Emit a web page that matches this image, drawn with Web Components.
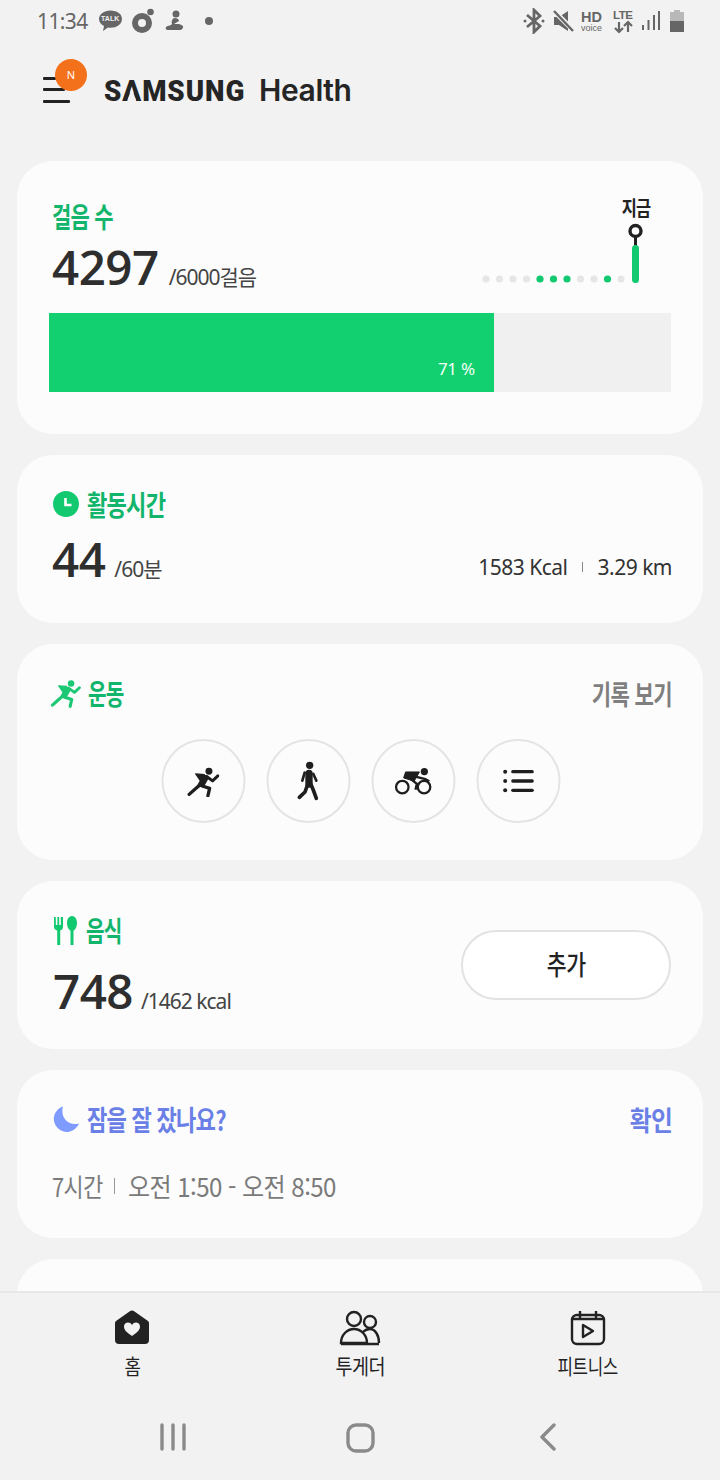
<!DOCTYPE html>
<html lang="ko">
<head>
<meta charset="utf-8">
<title>Samsung Health</title>
<style>
  html, body { margin: 0; padding: 0; background: #f2f2f2; }
  body { font-family: "Noto Sans CJK KR", "Noto Sans", sans-serif; }
</style>
</head>
<body>
<app-shell>
  <status-bar slot="top"></status-bar>
  <app-header slot="top"></app-header>

  <health-card style="--card-h:273px;--pad:34px">
    <card-title style="--sx:.75">걸음 수</card-title>
    <step-timeline slot="side"></step-timeline>
    <big-stat value="4297" goal="/6000걸음" style="margin-top:3px"></big-stat>
    <progress-strip percent="71.5" label="71 %" slot="bottom"></progress-strip>
  </health-card>

  <health-card style="--card-h:168px">
    <card-title>
      <svg slot="icon" width="26" height="26" viewBox="0 0 26 26" style="margin-left:1px"><circle cx="13" cy="13" r="13" fill="#12c96f"/><path d="M12.500 7v7h6" fill="none" stroke="#fff" stroke-width="2.600"/></svg>
      활동시간
    </card-title>
    <div style="display:flex;justify-content:space-between;align-items:flex-end;margin-top:7px">
      <big-stat value="44" goal="/60분" style="margin-top:0;--gap:9px"></big-stat>
      <trip-stats></trip-stats>
    </div>
  </health-card>

  <health-card style="--card-h:216px">
    <card-title style="--sx:.72">
      <run-icon slot="icon" style="color:#1cc873;margin-left:-2px;margin-right:-1px"></run-icon>
      운동
    </card-title>
    <card-link slot="side">기록 보기</card-link>
    <workout-row></workout-row>
  </health-card>

  <health-card style="--card-h:168px">
    <card-title style="--sx:.72">
      <svg slot="icon" width="25" height="29" viewBox="0 0 25 29" fill="#12c96f" style="margin-left:1px"><path d="M1 1h1.800v8h1.600V1h1.800v8h1.600V1H10v10c0 2-1.200 3-2.800 3.400V29H4.200V14.400C2.400 14 1 13 1 11z"/><path d="M19 0c3 0 5 3 5 7s-2 7-3.500 7.600V29h-3V14.600C16 14 14 11 14 7s2-7 5-7z"/></svg>
      음식
    </card-title>
    <big-stat value="748" goal="/1462 kcal" style="margin-top:13px;margin-left:1px;--gap:8px"></big-stat>
    <pill-button slot="side-center">추가</pill-button>
  </health-card>

  <health-card style="--card-h:168px">
    <card-title style="color:#6a80e6">
      <svg slot="icon" width="26" height="27" viewBox="0 0 26 26" style="margin-left:1px"><path d="M10 0a13 13 0 1 0 16 17C15 20 7 11 10 0z" fill="#7f9bff"/></svg>
      잠을 잘 잤나요?
    </card-title>
    <card-link slot="side" style="color:#6a80e6;--sx:.88">확인</card-link>
    <sleep-line></sleep-line>
  </health-card>

  <health-card style="--card-h:168px"></health-card>

  <bottom-nav slot="bottom"></bottom-nav>
  <system-nav slot="bottom"></system-nav>
</app-shell>

<script>
const KR = '"Noto Sans CJK KR", "Noto Sans", sans-serif';
const RUN = `
  <g fill="none" stroke-linecap="round" stroke-linejoin="round">
    <circle cx="176" cy="120" r="10.500" fill="currentColor"/>
    <path d="M168 134 150 166" stroke="currentColor" stroke-width="20" stroke-linecap="butt"/>
    <path d="M148 162 136 172 116 190M154 164 178 172 173 194" stroke="currentColor" stroke-width="10"/>
    <path d="M168 135 187 149 203 134" stroke="currentColor" stroke-width="9"/>
    <path d="M136 128 162 130 150 148z" fill="currentColor" stroke="currentColor" stroke-width="4"/>
  </g>`;

function define(name, css, html) {
  class El extends HTMLElement {
    constructor() {
      super();
      this.attachShadow({ mode: "open" });
    }
    connectedCallback() {
      const a = (k) => this.getAttribute(k) || "";
      this.shadowRoot.innerHTML = `<style>${css}</style>` + (typeof html === "function" ? html(a) : html);
    }
  }
  customElements.define(name, El);
}

define("run-icon", `
  :host { display:block; width:31px; height:30px; }
  svg { display:block; }
`, `<svg width="31" height="30" viewBox="108 105 100 92">${RUN}</svg>`);

define("app-shell", `
  :host { display:flex; flex-direction:column; width:720px; height:1480px; background:#f2f2f2; overflow:hidden; }
  main { flex:1; min-height:0; overflow:hidden; display:flex; flex-direction:column; gap:21px; padding:0 17px; }
  .bottom { flex:none; }
`, `<div><slot name="top"></slot></div><main><slot></slot></main><div class="bottom"><slot name="bottom"></slot></div>`);

define("status-bar", `
  :host { display:flex; align-items:center; height:44px; padding:0 36px 2px 37px; color:#666; box-sizing:border-box; }
  .time { font:400 21px "Noto Sans", sans-serif; letter-spacing:-.6px; margin-right:10px; color:#666; }
  .left, .right { display:flex; align-items:center; }
  .right { margin-left:auto; }
  .talk { position:relative; width:25px; height:25px; margin-right:9px; }
  .talk b { position:absolute; left:0; right:0; top:5px; text-align:center; font:700 7px/10px "Liberation Sans", sans-serif; color:#f2f2f2; }
  svg { display:block; }
`, `
  <div class="left">
    <span class="time">11:34</span>
    <div class="talk">
      <svg width="25" height="25" viewBox="0 0 25 25"><path d="M12.500 1.500C6 1.500 1 5.300 1 10c0 3 2 5.500 5 7l-1 5 5-3.400c.8.100 1.600.2 2.500.2C19 18.800 24 15 24 10S19 1.500 12.500 1.500z" fill="#666"/></svg>
      <b>TALK</b>
    </div>
    <svg width="24" height="26" viewBox="0 0 24 26" style="margin-right:9px"><circle cx="10" cy="15" r="7" fill="none" stroke="#666" stroke-width="6"/><circle cx="18.500" cy="4" r="3.300" fill="#666"/></svg>
    <svg width="20" height="24" viewBox="0 0 20 24" style="margin-right:19px"><circle cx="11" cy="5" r="3.500" fill="#666"/><path d="M9 9c3 0 5 1 5 3l-5 3c3 0 6-.5 9 2 .5 2-1 4-3 4H3c-2 0-3-1-2-3 2-2 5-1 6-3-1-2 0-5 2-6z" fill="#666"/><path d="M5 13c-1 1-1 2 0 3" stroke="#f2f2f2" fill="none" stroke-width="1.500"/></svg>
    <svg width="10" height="10" viewBox="0 0 10 10"><circle cx="5" cy="5" r="4" fill="#666"/></svg>
  </div>
  <div class="right">
    <svg width="22" height="26" viewBox="0 0 22 26" style="margin-right:8px"><path d="M4 7 17 18 11 24V2l6 6L4 19" fill="none" stroke="#666" stroke-width="2.800"/><circle cx="2" cy="13" r="1.500" fill="#666"/><circle cx="20" cy="13" r="1.500" fill="#666"/></svg>
    <svg width="22" height="24" viewBox="0 0 22 24" style="margin-right:6px"><path d="M1 8h5l9-6v20l-9-6H1z" fill="#666"/><path d="M1 2l20 20" stroke="#f2f2f2" stroke-width="5"/><path d="M1 2l19 20" stroke="#666" stroke-width="2.400"/></svg>
    <svg width="24" height="24" viewBox="0 0 24 24" style="margin-right:7px"><text x="0" y="13" font-family="Liberation Sans" font-weight="700" font-size="14.500" fill="#666">HD</text><text x="0" y="22" font-family="Liberation Sans" font-size="9" fill="#666">voice</text></svg>
    <svg width="23" height="26" viewBox="0 0 23 26" style="margin-right:5px"><text x="1" y="11" font-family="Liberation Sans" font-weight="700" font-size="11.500" fill="#666" textLength="20">LTE</text><path d="M7 14v10M3 20l4 4 4-4M16 24V14M12 18l4-4 4 4" fill="none" stroke="#666" stroke-width="2.200"/></svg>
    <svg width="20" height="22" viewBox="0 0 20 22" style="margin-right:10px"><path d="M2 20h2v-5H2zM7.500 20h2V10h-2zM13 20h2V5h-2zM18 20h2V1h-2z" fill="#666"/></svg>
    <svg width="14" height="22" viewBox="0 0 14 22"><path d="M4 0h6v2h4v9H0V2h4z" fill="#b8b8b8"/><rect y="11" width="14" height="11" fill="#666"/></svg>
  </div>
`);

define("app-header", `
  :host { display:flex; align-items:center; height:117px; padding-left:43px; box-sizing:border-box; padding-bottom:25px; }
  .menu { position:relative; width:27px; height:26px; margin-right:34px; flex:none; }
  .menu i { position:absolute; left:0; height:3px; background:#222; border-radius:1px; }
  .badge { position:absolute; left:12px; top:-18px; width:32px; height:32px; border-radius:50%; background:#f4711c; color:#fff; text-align:center; font:400 11px/32px "Noto Sans", sans-serif; }
  .logo { display:inline-block; width:155px; font:900 30px "Roboto", sans-serif; letter-spacing:1px; color:#252525; transform:scaleX(.925); transform-origin:left center; white-space:nowrap; }
  /* the wordmark's A has no crossbar */
  .a { position:relative; display:inline-block; }
  .a::after { content:""; position:absolute; left:50%; margin-left:-5.500px; top:15px; width:10px; height:14px; background:#f2f2f2; clip-path:polygon(50% 0, 100% 100%, 0 100%); }
  .health { font:600 30px "Inter", sans-serif; letter-spacing:-.4px; color:#252525; }
`, `
  <div class="menu">
    <i style="top:0;width:13px"></i><i style="top:11px;width:22px"></i><i style="top:23px;width:27px"></i>
    <div class="badge">N</div>
  </div>
  <span class="logo">S<span class="a">A</span>MSUNG</span><span class="health">Health</span>
`);

define("health-card", `
  :host { display:block; flex:none; position:relative; height:var(--card-h); background:#fcfcfc; border-radius:36px; box-sizing:border-box; }
  .pos { position:absolute; top:0; right:32px; bottom:0; display:flex; align-items:center; }
  .body { padding:var(--pad, 28px) 32px 0 35px; }
  .bottom { position:absolute; left:32px; right:32px; top:152px; }
  .side { position:absolute; right:31px; top:var(--pad, 28px); }
`, `
  <div class="body"><slot></slot></div>
  <div class="side"><slot name="side"></slot></div>
  <div class="pos"><slot name="side-center"></slot></div>
  <div class="bottom"><slot name="bottom"></slot></div>
`);

define("card-title", `
  :host { display:flex; align-items:center; gap:8px; height:44px; color:#12b56b; font:700 28px/44px ${KR}; letter-spacing:-1px; margin-top:-1px; }
  span { display:inline-block; white-space:nowrap; transform:scaleX(var(--sx, .79)); transform-origin:left center; }
`, `<slot name="icon"></slot><span><slot></slot></span>`);

define("card-link", `
  :host { display:block; font:700 27px/44px ${KR}; letter-spacing:-.8px; color:#7f7f7f; white-space:nowrap; }
  span { display:block; transform:scaleX(var(--sx, .78)); transform-origin:right center; }
`, `<span><slot></slot></span>`);

define("big-stat", `
  :host { display:flex; align-items:baseline; color:#2e2e2e; margin-top:2px; }
  b { font:600 47.500px/52px "Open Sans", sans-serif; letter-spacing:-.5px; }
  span { font:400 21px/26px "Noto Sans", ${KR}; letter-spacing:-1px; margin-left:var(--gap, 10px); color:#444; }
`, (a) => `<b>${a("value")}</b><span>${a("goal")}</span>`);

define("progress-strip", `
  :host { display:block; height:79px; background:#f0f0f0; position:relative; }
  .fill { height:100%; background:#12d06f; display:flex; align-items:flex-end; justify-content:flex-end; box-sizing:border-box; padding:0 19px 11px 0; }
  span { color:#f4fff8; font:400 17px/24px "Noto Sans", sans-serif; letter-spacing:-.3px; }
`, (a) => `<div class="fill" style="width:${a("percent")}%"><span>${a("label")}</span></div>`);

define("step-timeline", `
  :host { display:block; width:170px; height:100px; position:absolute; right:21px; top:-34px; }
  .now { position:absolute; left:134.500px; top:34px; width:40px; text-align:center; font:700 20px/26px ${KR}; color:#222; letter-spacing:-1px; transform:scaleX(.82); }
  svg { position:absolute; left:0; top:52px; }
`, () => {
  const on = [4, 5, 6, 9];
  let dots = "";
  for (let i = 0; i < 11; i++) dots += `<circle cx="${5 + i * 13.500}" cy="66" r="3.600" fill="${on.includes(i) ? "#12c96f" : "#e6e6e6"}"/>`;
  return `<div class="now">지금</div>
  <svg width="170" height="80" viewBox="0 0 170 80">${dots}
    <path d="M154.500 24v10" stroke="#222" stroke-width="3"/>
    <circle cx="154.500" cy="18" r="5.500" fill="#fff" stroke="#222" stroke-width="3.400"/>
    <rect x="151" y="32" width="7" height="38" rx="3.500" fill="#12c96f"/>
  </svg>`;
});

define("trip-stats", `
  :host { display:flex; align-items:center; font:400 21px/30px "Noto Sans", sans-serif; color:#333; letter-spacing:-.5px; padding-bottom:3px; margin-right:-1px; }
  i { width:1px; height:10px; background:#888; margin:0 15px 0 14px; }
`, `<span>1583 Kcal</span><i></i><span>3.29 km</span>`);

define("workout-row", `
  :host { display:flex; justify-content:center; gap:21px; margin:24px -32px 0 -35px; transform:translateX(.5px); }
  div { width:80px; height:80px; border:2px solid #e4e4e4; border-radius:50%; display:flex; align-items:center; justify-content:center; color:#1e1e1e; }
`, `
  <div><svg width="33" height="31" viewBox="108 105 100 92" color="#1e1e1e">${RUN}</svg></div>
  <div><svg width="25" height="40" viewBox="440 95 70 120"><g fill="none" stroke="#1e1e1e" stroke-linecap="round" stroke-linejoin="round"><circle cx="480" cy="108" r="11" fill="#1e1e1e" stroke="none"/><path d="M478 132v32" stroke-width="22" stroke-linecap="round"/><path d="M465 130 458 154M491 134 500 154" stroke-width="8"/><path d="M474 165 466 188 449 204M484 165 492 185 500 207" stroke-width="11"/></g></svg></div>
  <div><svg width="38" height="27" viewBox="733 112 114 82"><g fill="none" stroke="#1e1e1e"><circle cx="756" cy="170" r="19" stroke-width="7"/><circle cx="822" cy="170" r="19" stroke-width="7"/><circle cx="823" cy="123" r="11" fill="#1e1e1e" stroke="none"/><path d="M766 124 808 124 792 152 760 142z" fill="#1e1e1e" stroke="#1e1e1e" stroke-width="3"/><path d="M796 138 826 146 838 152M782 146 800 160 796 178" stroke-width="7"/></g></svg></div>
  <div><svg width="32" height="24" viewBox="1056 116 96 72"><g fill="#1e1e1e"><circle cx="1064" cy="124" r="6"/><circle cx="1064" cy="152" r="6"/><circle cx="1064" cy="180" r="6"/><rect x="1082" y="119" width="68" height="10" rx="5"/><rect x="1082" y="147" width="68" height="10" rx="5"/><rect x="1082" y="175" width="68" height="10" rx="5"/></g></svg></div>
`);

define("pill-button", `
  :host { display:flex; align-items:center; justify-content:center; width:210px; height:70px; box-sizing:border-box; border:2px solid #e2e2e2; border-radius:35px; background:#fff; color:#222; font:500 27px ${KR}; letter-spacing:-.5px; padding-bottom:3px; }
  span { display:block; transform:scaleX(.8); }
`, `<span><slot></slot></span>`);

define("sleep-line", `
  :host { display:flex; align-items:center; color:#7a7a7a; font:400 26px/36px ${KR}; letter-spacing:-.6px; margin-top:27px; white-space:nowrap; }
  i { width:1px; height:16px; background:#999; flex:none; margin:0 13px 0 12px; }
  .a { display:block; width:50px; transform:scaleX(.84); transform-origin:left center; }
  .b { display:block; transform:scaleX(.925); transform-origin:left center; }
`, `<span class="a">7시간</span><i></i><span class="b">오전 1:50 - 오전 8:50</span>`);

define("bottom-nav", `
  :host { display:grid; grid-template-columns:repeat(3, 228px); padding:0 18px; height:112px; border-top:2px solid #e8e8e8; box-sizing:border-box; background:#f2f2f2; position:relative; }
  div { display:flex; flex-direction:column; align-items:center; padding-top:17px; color:#222; font:400 21px/26px ${KR}; letter-spacing:-.5px; }
  svg { display:block; height:36px; margin-bottom:6px; }
  span { display:block; white-space:nowrap; }
`, `
  <div><svg width="38" height="36" viewBox="0 0 38 36"><path d="M16.500 1.500a4 4 0 0 1 5 0L35 11a3 3 0 0 1 1 2.500V30a4 4 0 0 1-4 4H6a4 4 0 0 1-4-4V13.500A3 3 0 0 1 3 11z" fill="#222"/><path d="M19 26c-6-4-8-6.500-8-9.500 0-4.500 6-5.500 8-1.500 2-4 8-3 8 1.500 0 3-2 5.500-8 9.500z" fill="#f2f2f2"/></svg><span style="transform:scaleX(.85)">홈</span></div>
  <div><svg width="42" height="36" viewBox="0 0 42 36" fill="none" stroke="#222" stroke-width="2.400"><circle cx="15" cy="9" r="7"/><circle cx="31" cy="12" r="6"/><path d="M2 33c0-8 6-14 13-14s13 6 13 14zM2 34h38M24 22c2-2 4-3 7-3 5 0 9 6 9 14"/></svg><span style="transform:scaleX(.88)">투게더</span></div>
  <div><svg width="36" height="36" viewBox="0 0 36 36" fill="none" stroke="#222" stroke-width="2.400" stroke-linejoin="round"><rect x="2" y="5" width="32" height="29" rx="5"/><path d="M10 1v7M26 1v7M2 9h32"/><path d="M13 15v12l10-6z"/></svg><span style="transform:scaleX(.8)">피트니스</span></div>
`);

define("system-nav", `
  :host { display:grid; grid-template-columns:repeat(3, 1fr); height:77px; background:#f2f2f2; box-sizing:border-box; }
  div { display:flex; justify-content:center; padding-top:20px; }
`, `
  <div style="transform:translateX(53px)"><svg width="28" height="28" viewBox="0 0 28 28" fill="none" stroke="#8a8a8a" stroke-width="3.400" stroke-linecap="round"><path d="M3 2v24M14 2v24M25 2v24"/></svg></div>
  <div><svg width="29" height="30" viewBox="0 0 29 30"><rect x="2" y="2" width="25" height="26" rx="8" fill="none" stroke="#8a8a8a" stroke-width="3.400"/></svg></div>
  <div style="transform:translateX(-52px)"><svg width="18" height="28" viewBox="0 0 18 28" fill="none" stroke="#8a8a8a" stroke-width="3.400" stroke-linecap="round" stroke-linejoin="round"><path d="M15 2 3 14l12 12"/></svg></div>
`);
</script>
</body>
</html>
